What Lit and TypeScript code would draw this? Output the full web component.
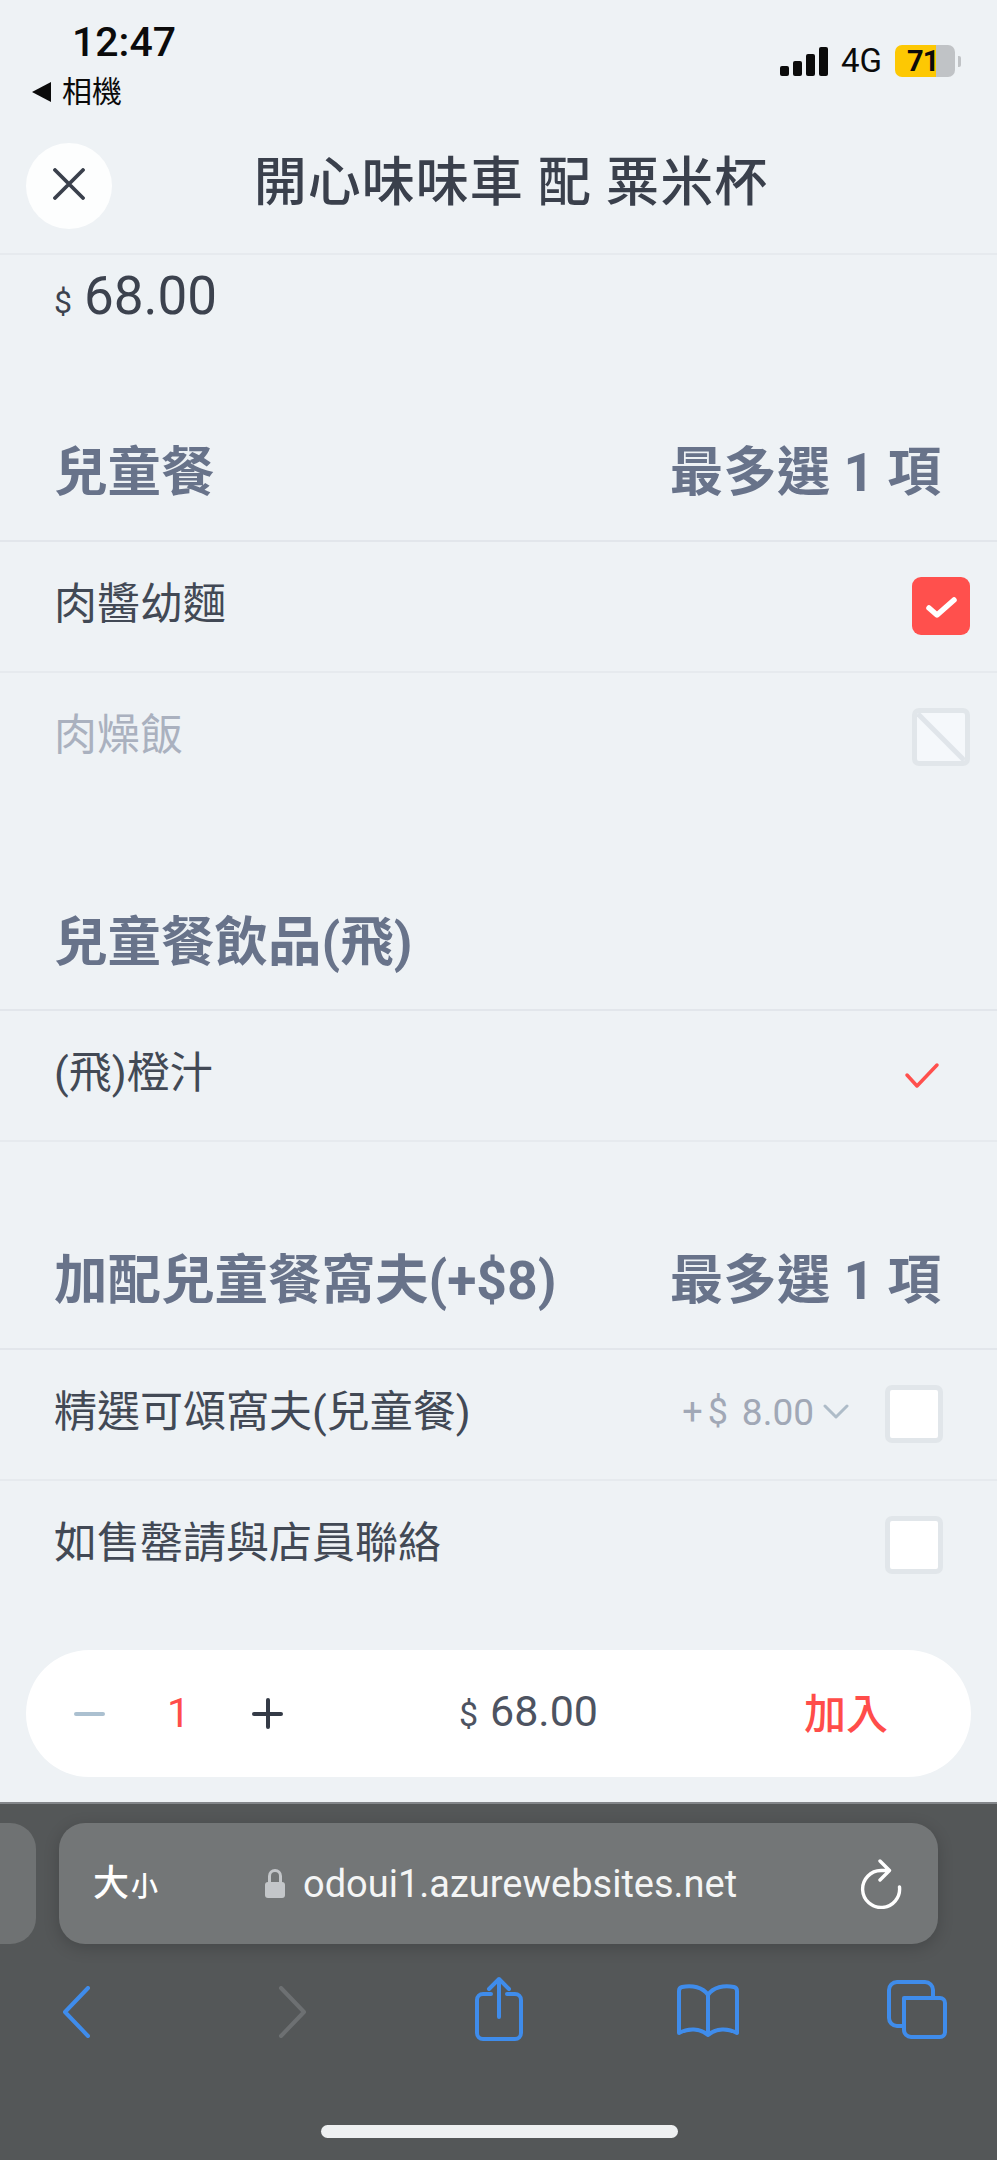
import { LitElement, html, css, svg } from "lit";
import { customElement } from "lit/decorators.js";

type Mark = "checked" | "disabled" | "tick" | "empty";

interface Row {
  label: string;
  mark: Mark;
  price?: string;
  muted?: boolean;
}

interface Section {
  title: string;
  limit?: string;
  inset?: boolean;
  rows: Row[];
}

const sections: Section[] = [
  {
    title: "兒童餐",
    limit: "最多選 1 項",
    rows: [
      { label: "肉醬幼麵", mark: "checked" },
      { label: "肉燥飯", mark: "disabled", muted: true },
    ],
  },
  {
    title: "兒童餐飲品(飛)",
    inset: true,
    rows: [{ label: "(飛)橙汁", mark: "tick" }],
  },
  {
    title: "加配兒童餐窩夫(+$8)",
    limit: "最多選 1 項",
    inset: true,
    rows: [
      { label: "精選可頌窩夫(兒童餐)", mark: "empty", price: "8.00" },
      { label: "如售罄請與店員聯絡", mark: "empty" },
    ],
  },
];

const markIcon = (mark: Mark) => {
  if (mark === "checked")
    return html`<div class="box on">
      <svg width="58" height="58" viewBox="0 0 58 58" fill="none">
        <path d="M17 31l8 7 17-15" stroke="#fff" stroke-width="5.5" stroke-linecap="round" stroke-linejoin="round" />
      </svg>
    </div>`;
  if (mark === "disabled")
    return html`<div class="box off">
      <svg width="48" height="48" viewBox="0 0 48 48" fill="none">
        <path d="M0 0l48 48" stroke="#e0e5ea" stroke-width="5" />
      </svg>
    </div>`;
  if (mark === "tick")
    return html`<div class="box bare">
      <svg width="58" height="58" viewBox="0 0 58 58" fill="none">
        <path d="M22 28l10 11 20-21" stroke="#ff504d" stroke-width="3.500" stroke-linecap="round" stroke-linejoin="round" />
      </svg>
    </div>`;
  return html`<div class="box"></div>`;
};

const icons = {
  back: svg`<path d="M26 2L3 26l23 24" />`,
  share: svg`<path d="M17 18H9a6 6 0 0 0-6 6v33a6 6 0 0 0 6 6h32a6 6 0 0 0 6-6V24a6 6 0 0 0-6-6h-8M25 41V3M15 13L25 3l10 10" />`,
  book: svg`<path d="M31 14C26 6 15 4 5 6c-2 .4-3 2-3 4v42c9-5 21-5 29 2 8-7 20-7 29-2V10c0-2-1-3.600-3-4-10-2-21 0-26 8zM31 14v40" />`,
  tabs: svg`<path d="M17 18h36a5 5 0 0 1 5 5v29a5 5 0 0 1-5 5H24a7 7 0 0 1-7-7zM46 18v-8a8 8 0 0 0-8-8H10a8 8 0 0 0-8 8v28a8 8 0 0 0 8 8h7" />`,
};

@customElement("app-root")
export class AppRoot extends LitElement {
  static styles = css`
    :host {
      display: block;
      width: 997px;
      height: 2160px;
      overflow: hidden;
      background: #eef2f5;
      color: #3c424e;
      font-family: Roboto, "Noto Sans CJK TC", sans-serif;
    }
    .page {
      display: flex;
      flex-direction: column;
      height: 2160px;
    }

    /* status bar */
    .status {
      height: 130px;
      box-sizing: border-box;
      padding: 21px 39px 0 32px;
      display: flex;
      justify-content: space-between;
      color: #0b0b0b;
    }
    .time {
      font-size: 41px;
      line-height: 42px;
      font-weight: 500;
      padding-left: 40px;
    }
    .return {
      display: flex;
      align-items: center;
      gap: 11px;
      font-size: 30px;
      line-height: 36px;
      margin-top: 11px;
    }
    .return i {
      width: 0;
      height: 0;
      border: 10px solid transparent;
      border-left: none;
      border-right: 19px solid #0b0b0b;
    }
    .signal {
      display: flex;
      align-items: center;
      gap: 13px;
      height: 32px;
      margin-top: 24px;
    }
    .bars {
      display: flex;
      align-items: flex-end;
      gap: 4px;
      height: 29px;
    }
    .bars i {
      width: 9px;
      border-radius: 2px;
      background: #0b0b0b;
    }
    .net {
      font-size: 33px;
      line-height: 32px;
    }
    .cell {
      display: flex;
      align-items: center;
      gap: 3px;
      margin-right: -3px;
    }
    .cell::after {
      content: "";
      width: 3px;
      height: 11px;
      border-radius: 0 2px 2px 0;
      background: #c0c3c6;
    }
    .battery {
      width: 60px;
      height: 32px;
      box-sizing: border-box;
      padding-left: 12px;
      border-radius: 7px;
      background: linear-gradient(90deg, #fdc803 41px, #c0c3c6 41px);
      font-size: 29px;
      line-height: 32px;
      font-weight: 700;
      letter-spacing: -1px;
      white-space: nowrap;
    }

    /* title */
    .header {
      height: 125px;
      box-sizing: border-box;
      padding: 13px 0 0 25px;
      border-bottom: 2px solid #e6eaee;
      position: relative;
      display: flex;
      justify-content: center;
    }
    .close {
      position: absolute;
      left: 26px;
      top: 13px;
      width: 86px;
      height: 86px;
      border-radius: 50%;
      background: #fdfefe;
      display: flex;
      align-items: center;
      justify-content: center;
    }
    .close svg {
      margin-bottom: 4px;
    }
    .title {
      font-size: 53px;
      line-height: 80px;
      font-weight: 500;
      white-space: nowrap;
      letter-spacing: 1px;
      color: #3a404c;
    }

    /* options */
    .body {
      flex: 1;
      min-height: 0;
      overflow: hidden;
    }
    .total {
      height: 79px;
      padding: 4px 0 0 54px;
      box-sizing: border-box;
      display: flex;
      align-items: center;
      gap: 12px;
      font-size: 53px;
      line-height: 75px;
    }
    .total small {
      font-size: 32px;
      padding-top: 12px;
    }
    .section {
      padding-top: 71.500px;
    }
    .head {
      height: 136px;
      box-sizing: border-box;
      padding: 0 56px 10px 54px;
      border-bottom: 2px solid #e2e6eb;
      display: flex;
      align-items: center;
      justify-content: space-between;
      font-size: 53.500px;
      font-weight: 700;
      color: #68738a;
      white-space: nowrap;
    }
    .row {
      height: 131px;
      box-sizing: border-box;
      padding: 0 27px 0 54px;
      border-bottom: 2px solid #e6eaee;
      display: flex;
      align-items: center;
      font-size: 43px;
      color: #424955;
      white-space: nowrap;
    }
    .row.muted {
      color: #aab1bf;
    }
    .row.last {
      border-bottom-color: transparent;
    }
    .inset .row {
      padding-right: 54px;
    }
    .inset .row.last {
      border-bottom-color: #e6eaee;
    }
    .label {
      flex: 1;
      padding-bottom: 13px;
    }
    .addon {
      display: flex;
      align-items: center;
      margin-right: 36px;
      font-size: 36px;
      color: #a1a8b6;
      padding-bottom: 4px;
    }
    .addon i {
      font-style: normal;
      margin-right: 5px;
    }
    .addon em {
      font-style: normal;
      font-size: 37px;
      margin: 0 9px 0 14px;
    }
    .box {
      width: 58px;
      height: 58px;
      box-sizing: border-box;
      border: 5px solid #e1e6ea;
      border-radius: 7px;
      background: #fff;
      flex: none;
    }
    .box svg {
      display: block;
    }
    .box.on {
      border: none;
      background: #ff504d;
      border-radius: 9px;
    }
    .box.off {
      background: #f5f8fb;
      overflow: hidden;
    }
    .box.bare {
      border: none;
      background: none;
    }

    /* quantity pill */
    .dock {
      height: 192px;
      box-sizing: border-box;
      padding: 40px 26px 0;
      flex: none;
    }
    .pill {
      height: 127px;
      border-radius: 64px;
      background: #fff;
      display: flex;
      align-items: center;
      padding: 0 83px 0 48px;
    }
    .step {
      width: 31px;
      height: 4px;
      border-radius: 2px;
      position: relative;
      background: #abc0d0;
    }
    .step.plus {
      background: #343a46;
    }
    .step.plus::after {
      content: "";
      position: absolute;
      left: 13.5px;
      top: -13.5px;
      width: 4px;
      height: 31px;
      border-radius: 2px;
      background: #343a46;
    }
    .qty {
      width: 147px;
      text-align: center;
      font-size: 41px;
      color: #ff4d4a;
      padding-bottom: 2px;
    }
    .sum {
      flex: 1;
      display: flex;
      justify-content: center;
      align-items: baseline;
      gap: 12px;
      font-size: 43px;
      color: #4d5361;
      padding: 0 30px 6px 0;
    }
    .sum small {
      font-size: 34px;
    }
    .add {
      font-size: 42px;
      font-weight: 500;
      color: #ff4d4a;
      padding-bottom: 6px;
    }

    /* browser chrome */
    .chrome {
      height: 358px;
      flex: none;
      box-sizing: border-box;
      background: #545758;
      border-top: 2px solid #83868a;
      padding-top: 19px;
      position: relative;
    }
    .tabs {
      display: flex;
      gap: 23px;
      margin-left: -40px;
      width: 978px;
    }
    .ghost {
      width: 76px;
      height: 121px;
      border-radius: 0 26px 26px 0;
      background: #6f7273;
    }
    .url {
      flex: 1;
      height: 121px;
      border-radius: 26px;
      background: #737677;
      box-shadow: 0 4px 16px rgba(0, 0, 0, 0.18);
      display: flex;
      align-items: center;
      padding: 0 36px 0 34px;
      color: #fff;
    }
    .aa {
      width: 172px;
      font-size: 36px;
      font-weight: 500;
      line-height: 36px;
      padding-top: 4px;
    }
    .aa small {
      font-size: 27px;
      margin-left: 2px;
    }
    .lock {
      width: 20px;
      height: 16px;
      border-radius: 3px;
      background: #c3c6c9;
      position: relative;
      margin: 12px 18px 0 0;
    }
    .lock::before {
      content: "";
      position: absolute;
      left: 3px;
      top: -13px;
      width: 14px;
      height: 14px;
      box-sizing: border-box;
      border: 3px solid #c3c6c9;
      border-bottom: none;
      border-radius: 7px 7px 0 0;
    }
    .host {
      flex: 1;
      font-size: 38px;
      color: #f4f5f5;
      white-space: nowrap;
    }
    .nav {
      display: flex;
      align-items: flex-start;
      padding: 42px 0 0 62px;
      height: 70px;
    }
    .nav svg {
      display: block;
      flex: none;
      fill: none;
      stroke: #3f8ceb;
      stroke-width: 4;
      stroke-linejoin: round;
      stroke-linecap: round;
    }
    .nav svg.forward {
      stroke: #6d7072;
      margin-left: 185px;
      transform: scaleX(-1);
    }
    .nav svg.share {
      margin: -10px 0 0 167px;
    }
    .nav svg.book {
      margin: -5px 0 0 153px;
    }
    .nav svg.pages {
      margin: -6px 0 0 148px;
    }
    .home {
      position: absolute;
      left: 321px;
      bottom: 22px;
      width: 357px;
      height: 13px;
      border-radius: 7px;
      background: #eef0f1;
    }
  `;

  private renderRow(row: Row, last: boolean) {
    const cls = `row ${row.muted ? "muted" : ""} ${last ? "last" : ""}`;
    return html`<div class=${cls}>
      <span class="label">${row.label}</span>
      ${row.price
        ? html`<span class="addon">
            <i>+</i>$<em>${row.price}</em>
            <svg width="26" height="16" viewBox="0 0 26 16" fill="none">
              <path d="M2 2l11 11L24 2" stroke="#aebcc8" stroke-width="3" stroke-linecap="round" stroke-linejoin="round" />
            </svg>
          </span>`
        : ""}
      ${markIcon(row.mark)}
    </div>`;
  }

  render() {
    return html`<div class="page">
      <div class="status">
        <div>
          <div class="time">12:47</div>
          <div class="return"><i></i>相機</div>
        </div>
        <div class="signal">
          <div class="bars">
            <i style="height:10px"></i><i style="height:15px"></i><i style="height:22px"></i><i style="height:29px"></i>
          </div>
          <span class="net">4G</span>
          <div class="cell"><div class="battery">71</div></div>
        </div>
      </div>

      <div class="header">
        <div class="close">
          <svg width="32" height="32" viewBox="0 0 32 32" fill="none">
            <path d="M2 2l28 28M30 2L2 30" stroke="#3a404c" stroke-width="3.800" stroke-linecap="round" />
          </svg>
        </div>
        <div class="title">開心味味車 配 粟米杯</div>
      </div>

      <div class="body">
        <div class="total"><small>$</small>68.00</div>
        ${sections.map(
          (s) => html`<div class="section ${s.inset ? "inset" : ""}">
            <div class="head">
              <span>${s.title}</span>
              ${s.limit ? html`<span>${s.limit}</span>` : ""}
            </div>
            ${s.rows.map((r, i) => this.renderRow(r, i === s.rows.length - 1 && s.rows.length > 1))}
          </div>`
        )}
      </div>

      <div class="dock">
        <div class="pill">
          <div class="step"></div>
          <div class="qty">1</div>
          <div class="step plus"></div>
          <div class="sum"><small>$</small>68.00</div>
          <div class="add">加入</div>
        </div>
      </div>

      <div class="chrome">
        <div class="tabs">
          <div class="ghost"></div>
          <div class="url">
            <div class="aa">大<small>小</small></div>
            <div class="lock"></div>
            <div class="host">odoui1.azurewebsites.net</div>
            <svg width="42" height="50" viewBox="0 0 42 50" fill="none">
              <path d="M39.5 28A18.500 18.500 0 1 1 21 11.500h7M20 2l9.500 9.500L20 21" stroke="#fff" stroke-width="3.400" stroke-linecap="round" stroke-linejoin="round" />
            </svg>
          </div>
        </div>
        <div class="nav">
          <svg width="30" height="52" viewBox="0 0 30 52">${icons.back}</svg>
          <svg class="forward" width="30" height="52" viewBox="0 0 30 52">${icons.back}</svg>
          <svg class="share" width="50" height="65" viewBox="0 0 50 65">${icons.share}</svg>
          <svg class="book" width="62" height="56" viewBox="0 0 62 56">${icons.book}</svg>
          <svg class="pages" width="60" height="60" viewBox="0 0 60 60">${icons.tabs}</svg>
        </div>
        <div class="home"></div>
      </div>
    </div>`;
  }
}
